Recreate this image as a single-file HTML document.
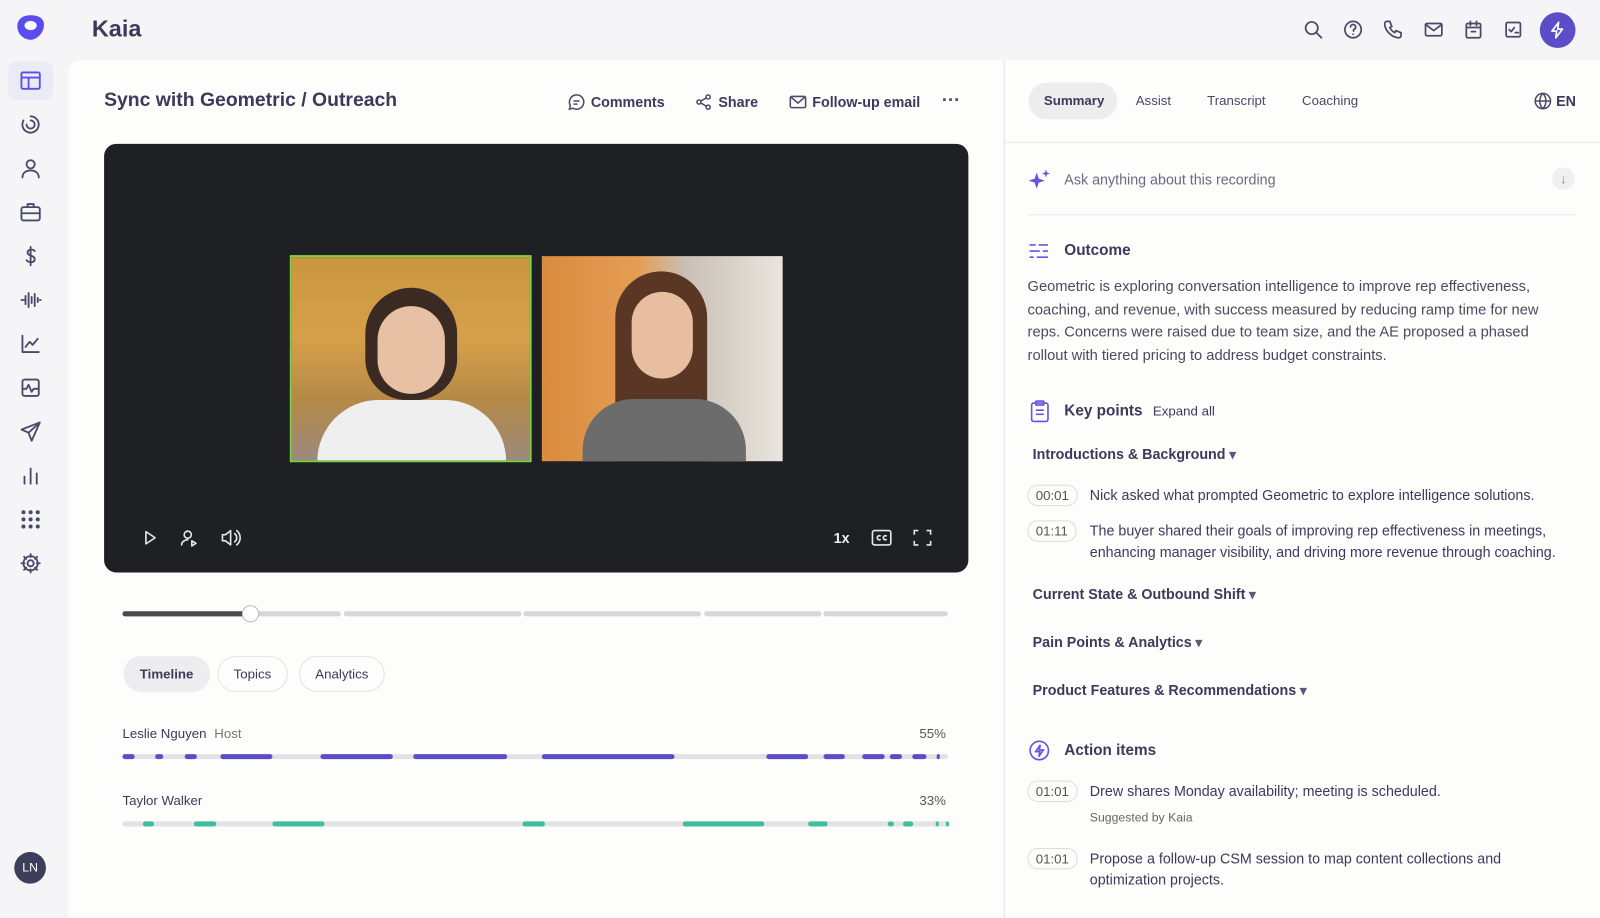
<!DOCTYPE html>
<html><head><meta charset="utf-8"><style>
*{box-sizing:border-box;margin:0;padding:0}
html,body{width:1600px;height:900px;overflow:hidden;background:#f5f5f8}
#s{position:absolute;left:0;top:0;width:1568px;height:882px;transform:scale(1.020408);transform-origin:0 0;font-family:"Liberation Sans",sans-serif;color:#3b3a5a}
.abs{position:absolute}
.ic{position:absolute;left:19px;width:22px;height:22px;fill:none;stroke:#4a4a66;stroke-width:1.8;stroke-linecap:round;stroke-linejoin:round}
.top svg{position:absolute;top:19px;width:20px;height:20px;fill:none;stroke:#4a4a66;stroke-width:1.7;stroke-linecap:round;stroke-linejoin:round}
.main{left:67px;top:59px;width:916px;height:841px;background:#fdfdfc;border-top-left-radius:12px}
.right{left:984px;top:59px;width:616px;height:841px;background:#fdfdfc;border-left:1px solid #e8e8ec}
.act{font-size:14px;color:#3b3a5a;font-weight:bold;top:92px}
.tab{position:absolute;top:643px;height:35px;border:1px solid #e2e2e6;border-radius:18px;font-size:13px;padding:0 15px;line-height:33px;color:#3b3a5a}
.bar{position:absolute;height:5px;border-radius:3px}
.ts{position:absolute;left:1028px;border:1px solid #ddd;border-radius:10px;font-size:13px;padding:2px 7px;color:#555}
.kt{position:absolute;left:1068px;font-size:14px;color:#3b3a5a;line-height:21px}
.sec{position:absolute;left:1012px;font-size:14px;font-weight:bold;color:#3b3a5a}
.sec:after{content:" ▾";color:#5b5b80;font-size:13px}
</style></head><body><div id="s">
<svg class="abs" style="left:15px;top:13px" width="30" height="28" viewBox="0 0 30 28"><path d="M15 2C24 2 29 6 28 13 27 21 20 26 15 26 9 26 2 21 2 13 2 6 7 2 15 2Z" fill="#5b4cf0"/><ellipse cx="15" cy="12" rx="6" ry="4.5" fill="#fff"/></svg>
<div class="abs" style="left:8px;top:60px;width:44px;height:38px;background:#ebebf5;border-radius:8px"></div>
<svg class="ic" style="top:68px;stroke:#5b4cf0" viewBox="0 0 22 22"><rect x="2" y="3" width="18" height="16" rx="1.5"/><path d="M2 8h18M9 8v11"/></svg>
<svg class="ic" style="top:111px" viewBox="0 0 22 22"><path d="M11 3a8 8 0 1 1-7 4"/><path d="M11 7a4 4 0 1 1-4 4"/></svg>
<svg class="ic" style="top:154px" viewBox="0 0 22 22"><circle cx="11" cy="7" r="4"/><path d="M3 20c0-5 4-7 8-7s8 2 8 7"/></svg>
<svg class="ic" style="top:197px" viewBox="0 0 22 22"><rect x="2" y="6" width="18" height="13" rx="2"/><path d="M8 6V3h6v3M2 12h18"/></svg>
<svg class="ic" style="top:240px" viewBox="0 0 22 22"><path d="M15 6c-1-2-7-2-7 1.5S15 10 15 14s-6 3.5-8 1M11 2v18"/></svg>
<svg class="ic" style="top:283px" viewBox="0 0 22 22"><path d="M2 11h3M6 7v8M9 4v14M12 8v6M15 5v12M18 9v4M20 11h1"/></svg>
<svg class="ic" style="top:326px" viewBox="0 0 22 22"><path d="M3 3v16h16M6 14l4-5 3 3 5-6"/></svg>
<svg class="ic" style="top:369px" viewBox="0 0 22 22"><rect x="3" y="3" width="16" height="16" rx="2"/><path d="M3 12h4l2-4 3 7 2-3h5"/></svg>
<svg class="ic" style="top:412px" viewBox="0 0 22 22"><path d="M20 2L2 9l7 3 3 8 8-18zM9 12l11-10"/></svg>
<svg class="ic" style="top:455px" viewBox="0 0 22 22"><path d="M5 19v-7M11 19V4M17 19v-10"/></svg>
<svg class="ic" style="top:498px;fill:#4a4a66;stroke:none" viewBox="0 0 22 22"><circle cx="4" cy="4" r="2"/><circle cx="11" cy="4" r="2"/><circle cx="18" cy="4" r="2"/><circle cx="4" cy="11" r="2"/><circle cx="11" cy="11" r="2"/><circle cx="18" cy="11" r="2"/><circle cx="4" cy="18" r="2"/><circle cx="11" cy="18" r="2"/><circle cx="18" cy="18" r="2"/></svg>
<svg class="ic" style="top:541px" viewBox="0 0 22 22"><circle cx="11" cy="11" r="3"/><path d="M11 2v3M11 17v3M2 11h3M17 11h3M4.6 4.6l2.1 2.1M15.3 15.3l2.1 2.1M4.6 17.4l2.1-2.1M15.3 6.7l2.1-2.1"/><circle cx="11" cy="11" r="7"/></svg>
<div class="abs" style="left:14px;top:835px;width:31px;height:31px;border-radius:50%;background:#3d3d5c;color:#fff;font-size:12px;text-align:center;line-height:31px">LN</div>
<div class="abs" style="left:90px;top:15px;font-size:23px;font-weight:bold;color:#3b3a5a">Kaia</div>
<div class="top">
<svg style="left:1277px" viewBox="0 0 20 20"><circle cx="8.5" cy="8.5" r="6"/><path d="M13 13l5 5"/></svg>
<svg style="left:1316px" viewBox="0 0 20 20"><circle cx="10" cy="10" r="8"/><path d="M7.5 7.5a2.5 2.5 0 1 1 3 2.5v1.5M10 14.5v.2"/></svg>
<svg style="left:1355px" viewBox="0 0 20 20"><path d="M4 2h3l2 5-2 1a10 10 0 0 0 5 5l1-2 5 2v3c0 1-1 2-2 2C9 18 2 11 2 4c0-1 1-2 2-2z"/></svg>
<svg style="left:1395px" viewBox="0 0 20 20"><rect x="2" y="4" width="16" height="12" rx="1.5"/><path d="M2 5l8 6 8-6"/></svg>
<svg style="left:1434px" viewBox="0 0 20 20"><rect x="3" y="4" width="14" height="14" rx="1.5"/><path d="M3 8h14M7 2v4M13 2v4M8 12h4"/></svg>
<svg style="left:1473px" viewBox="0 0 20 20"><rect x="3" y="3" width="14" height="14" rx="1.5"/><path d="M6 10l2 2 3-4M12 13h3"/></svg>
</div>
<div class="abs" style="left:1509px;top:12px;width:35px;height:35px;border-radius:50%;background:#5b4cc8"></div>
<svg class="abs" style="left:1517px;top:20px" width="19" height="19" viewBox="0 0 20 20"><path d="M11 2L4 11h5l-1 7 7-9h-5z" fill="none" stroke="#fff" stroke-width="1.7" stroke-linejoin="round"/></svg>
<div class="abs main"></div>
<div class="abs" style="left:102px;top:88px;font-size:19px;font-weight:bold;color:#3b3a5a">Sync with Geometric / Outreach</div>
<svg class="abs" style="left:556px;top:91px" width="18" height="18" viewBox="0 0 18 18" fill="none" stroke="#4a4a66" stroke-width="1.5"><path d="M9 2a7 7 0 0 0-6 10.5L2 16l3.5-1A7 7 0 1 0 9 2z"/><path d="M6 8h6M6 11h4"/></svg>
<div class="abs act" style="left:579px">Comments</div>
<svg class="abs" style="left:681px;top:91px" width="18" height="18" viewBox="0 0 18 18" fill="none" stroke="#4a4a66" stroke-width="1.5"><circle cx="13" cy="4" r="2"/><circle cx="4" cy="9" r="2"/><circle cx="13" cy="14" r="2"/><path d="M6 8l5-3M6 10l5 3"/></svg>
<div class="abs act" style="left:704px">Share</div>
<svg class="abs" style="left:773px;top:91px" width="18" height="18" viewBox="0 0 18 18" fill="none" stroke="#4a4a66" stroke-width="1.5"><rect x="1.5" y="3.5" width="15" height="11" rx="1.5"/><path d="M2 4l7 6 7-6"/></svg>
<div class="abs act" style="left:796px">Follow-up email</div>
<div class="abs" style="left:923px;top:88px;font-size:18px;font-weight:bold;color:#4a4a66">···</div>
<div class="abs" style="left:102px;top:141px;width:847px;height:420px;background:#1f2023;border-radius:12px"></div>
<div class="abs" style="left:284px;top:250px;width:237px;height:203px;border:2px solid #7ed04a;overflow:hidden;background:linear-gradient(180deg,#c9963f 0%,#d6a04a 40%,#b58a46 70%,#9b8a7e 100%)">
<div class="abs" style="left:72px;top:30px;width:90px;height:110px;border-radius:45px 45px 40px 40px;background:#3a2a22"></div>
<div class="abs" style="left:84px;top:48px;width:66px;height:86px;border-radius:33px;background:#e8c0a3"></div>
<div class="abs" style="left:25px;top:140px;width:185px;height:70px;border-radius:60px 60px 0 0;background:#efefef"></div></div>
<div class="abs" style="left:531px;top:251px;width:236px;height:201px;overflow:hidden;background:linear-gradient(90deg,#d98b3e 0%,#e49d54 40%,#c9c0b6 60%,#e9e5de 100%)">
<div class="abs" style="left:72px;top:15px;width:90px;height:190px;border-radius:45px 45px 0 0;background:#5a3624"></div>
<div class="abs" style="left:88px;top:35px;width:60px;height:85px;border-radius:30px;background:#e8bea0"></div>
<div class="abs" style="left:40px;top:140px;width:160px;height:70px;border-radius:50px 50px 0 0;background:#6c6c6c"></div></div>
<svg class="abs" style="left:138px;top:518px" width="110" height="18" viewBox="0 0 110 18" fill="none" stroke="#e6e6e6" stroke-width="1.6" stroke-linejoin="round" stroke-linecap="round"><path d="M5 3l9 6-9 6z"/><circle cx="46" cy="6" r="3.5"/><path d="M40 16c0-3 3-5 6-5M50 12l4 2.5-4 2.5z"/><path d="M80 6h3l5-4v14l-5-4h-3zM92 5a5 5 0 0 1 0 8M94 2a9 9 0 0 1 0 14"/></svg>
<div class="abs" style="left:817px;top:519px;color:#eee;font-size:14px;font-weight:bold">1x</div>
<svg class="abs" style="left:854px;top:518px" width="60" height="18" viewBox="0 0 60 18" fill="none" stroke="#e6e6e6" stroke-width="1.6"><rect x="1" y="2" width="18" height="14" rx="2"/><path d="M9 7.5a2 2 0 1 0 0 3M15 7.5a2 2 0 1 0 0 3"/><path d="M42 6V2h4M54 2h4v4M58 12v4h-4M46 16h-4v-4"/></svg>
<div class="bar" style="left:120px;top:599px;width:214px;background:#d6d6dc"></div>
<div class="bar" style="left:120px;top:599px;width:126px;background:#4a4a4e"></div>
<div class="bar" style="left:337px;top:599px;width:174px;background:#d6d6dc"></div>
<div class="bar" style="left:513px;top:599px;width:174px;background:#d6d6dc"></div>
<div class="bar" style="left:690px;top:599px;width:115px;background:#d6d6dc"></div>
<div class="bar" style="left:807px;top:599px;width:122px;background:#d6d6dc"></div>
<div class="abs" style="left:237px;top:593px;width:17px;height:17px;border-radius:50%;background:#fff;border:1px solid #bbb"></div>
<div class="tab" style="left:121px;background:#ededf0;border-color:#ededf0;font-weight:bold">Timeline</div>
<div class="tab" style="left:213px">Topics</div>
<div class="tab" style="left:293px">Analytics</div>
<div class="abs" style="left:120px;top:711px;font-size:13px;color:#3b3a5a">Leslie Nguyen <span style="color:#777;margin-left:4px">Host</span></div>
<div class="abs" style="left:901px;top:711px;font-size:13px;color:#555">55%</div>
<div class="bar" style="left:120px;top:739px;width:809px;background:#e2e2e6"></div>
<div class="abs" style="left:120px;top:777px;font-size:13px;color:#3b3a5a">Taylor Walker</div>
<div class="abs" style="left:901px;top:777px;font-size:13px;color:#555">33%</div>
<div class="bar" style="left:120px;top:805px;width:809px;background:#e2e2e6"></div>
<div class="bar" style="left:120px;top:739px;width:12px;background:#5b4cc8"></div>
<div class="bar" style="left:152px;top:739px;width:8px;background:#5b4cc8"></div>
<div class="bar" style="left:181px;top:739px;width:12px;background:#5b4cc8"></div>
<div class="bar" style="left:216px;top:739px;width:51px;background:#5b4cc8"></div>
<div class="bar" style="left:314px;top:739px;width:71px;background:#5b4cc8"></div>
<div class="bar" style="left:405px;top:739px;width:92px;background:#5b4cc8"></div>
<div class="bar" style="left:531px;top:739px;width:130px;background:#5b4cc8"></div>
<div class="bar" style="left:751px;top:739px;width:41px;background:#5b4cc8"></div>
<div class="bar" style="left:807px;top:739px;width:21px;background:#5b4cc8"></div>
<div class="bar" style="left:845px;top:739px;width:22px;background:#5b4cc8"></div>
<div class="bar" style="left:872px;top:739px;width:12px;background:#5b4cc8"></div>
<div class="bar" style="left:894px;top:739px;width:14px;background:#5b4cc8"></div>
<div class="bar" style="left:918px;top:739px;width:3px;background:#5b4cc8"></div>
<div class="bar" style="left:140px;top:805px;width:11px;background:#3fbf9a"></div>
<div class="bar" style="left:190px;top:805px;width:22px;background:#3fbf9a"></div>
<div class="bar" style="left:267px;top:805px;width:51px;background:#3fbf9a"></div>
<div class="bar" style="left:512px;top:805px;width:22px;background:#3fbf9a"></div>
<div class="bar" style="left:669px;top:805px;width:80px;background:#3fbf9a"></div>
<div class="bar" style="left:792px;top:805px;width:19px;background:#3fbf9a"></div>
<div class="bar" style="left:870px;top:805px;width:6px;background:#3fbf9a"></div>
<div class="bar" style="left:885px;top:805px;width:10px;background:#3fbf9a"></div>
<div class="bar" style="left:917px;top:805px;width:3px;background:#3fbf9a"></div>
<div class="bar" style="left:927px;top:805px;width:3px;background:#3fbf9a"></div>
<div class="abs right"></div>
<div class="abs" style="left:1008px;top:81px;width:87px;height:36px;border-radius:18px;background:#ededf0"></div>
<div class="abs" style="left:1023px;top:91px;font-size:13px;font-weight:bold;color:#3b3a5a">Summary</div>
<div class="abs" style="left:1113px;top:91px;font-size:13px;color:#4a4a66">Assist</div>
<div class="abs" style="left:1183px;top:91px;font-size:13px;color:#4a4a66">Transcript</div>
<div class="abs" style="left:1276px;top:91px;font-size:13px;color:#4a4a66">Coaching</div>
<svg class="abs" style="left:1503px;top:90px" width="18" height="18" viewBox="0 0 18 18" fill="none" stroke="#4a4a66" stroke-width="1.5"><circle cx="9" cy="9" r="7.5"/><path d="M1.5 9h15M9 1.5c-4 4-4 11 0 15M9 1.5c4 4 4 11 0 15"/></svg>
<div class="abs" style="left:1525px;top:91px;font-size:14px;font-weight:bold;color:#3b3a5a">EN</div>
<div class="abs" style="left:985px;top:139px;width:615px;height:1px;background:#e8e8ec"></div>
<svg class="abs" style="left:1007px;top:164px" width="24" height="24" viewBox="0 0 24 24" fill="#6b52e0"><path d="M9 5l2 6 6 2-6 2-2 6-2-6-6-2 6-2z"/><path d="M18 2l1 3 3 1-3 1-1 3-1-3-3-1 3-1z"/></svg>
<div class="abs" style="left:1043px;top:168px;font-size:14px;color:#6b6b80">Ask anything about this recording</div>
<div class="abs" style="left:1521px;top:164px;width:22px;height:22px;border-radius:50%;background:#f0f0f3;color:#999;font-size:14px;text-align:center;line-height:22px">↓</div>
<div class="abs" style="left:1007px;top:210px;width:537px;height:1px;background:#e8e8ec"></div>
<svg class="abs" style="left:1008px;top:237px" width="20" height="18" viewBox="0 0 20 18" fill="none" stroke="#6b52e0" stroke-width="1.6"><path d="M1 3h6M10 3h9M1 9h10M14 9h5M1 15h4M8 15h11"/></svg>
<div class="abs" style="left:1043px;top:237px;font-size:15px;font-weight:bold;color:#3b3a5a">Outcome</div>
<div class="abs" style="left:1007px;top:270px;width:530px;font-size:14.4px;line-height:22.7px;color:#4a4a5e">Geometric is exploring conversation intelligence to improve rep effectiveness, coaching, and revenue, with success measured by reducing ramp time for new reps. Concerns were raised due to team size, and the AE proposed a phased rollout with tiered pricing to address budget constraints.</div>
<svg class="abs" style="left:1009px;top:392px" width="20" height="22" viewBox="0 0 20 22" fill="none" stroke="#6b52e0" stroke-width="1.6"><rect x="2" y="3" width="16" height="18" rx="2"/><rect x="6" y="1" width="8" height="4" rx="1"/><path d="M6 10h8M6 14h8"/></svg>
<div class="abs" style="left:1043px;top:394px;font-size:15px;font-weight:bold;color:#3b3a5a">Key points <span style="font-weight:normal;font-size:13px;margin-left:6px">Expand all</span></div>
<div class="sec" style="top:437px">Introductions &amp; Background</div>
<div class="ts" style="top:475px;left:1007px">00:01</div>
<div class="kt" style="top:475px">Nick asked what prompted Geometric to explore intelligence solutions.</div>
<div class="ts" style="top:510px;left:1007px">01:11</div>
<div class="kt" style="top:510px;width:470px">The buyer shared their goals of improving rep effectiveness in meetings, enhancing manager visibility, and driving more revenue through coaching.</div>
<div class="sec" style="top:574px">Current State &amp; Outbound Shift</div>
<div class="sec" style="top:621px">Pain Points &amp; Analytics</div>
<div class="sec" style="top:668px">Product Features &amp; Recommendations</div>
<svg class="abs" style="left:1008px;top:725px" width="21" height="21" viewBox="0 0 21 21" fill="none" stroke="#6b52e0" stroke-width="1.6"><circle cx="10.5" cy="10.5" r="9"/><path d="M11.5 5L7 11.5h4l-1 5 4.5-6.5h-4z"/></svg>
<div class="abs" style="left:1043px;top:727px;font-size:15px;font-weight:bold;color:#3b3a5a">Action items</div>
<div class="ts" style="top:765px;left:1007px">01:01</div>
<div class="kt" style="top:765px">Drew shares Monday availability; meeting is scheduled.</div>
<div class="abs" style="left:1068px;top:794px;font-size:12px;color:#666">Suggested by Kaia</div>
<div class="ts" style="top:831px;left:1007px">01:01</div>
<div class="kt" style="top:831px;width:480px">Propose a follow-up CSM session to map content collections and optimization projects.</div>
</div></body></html>
